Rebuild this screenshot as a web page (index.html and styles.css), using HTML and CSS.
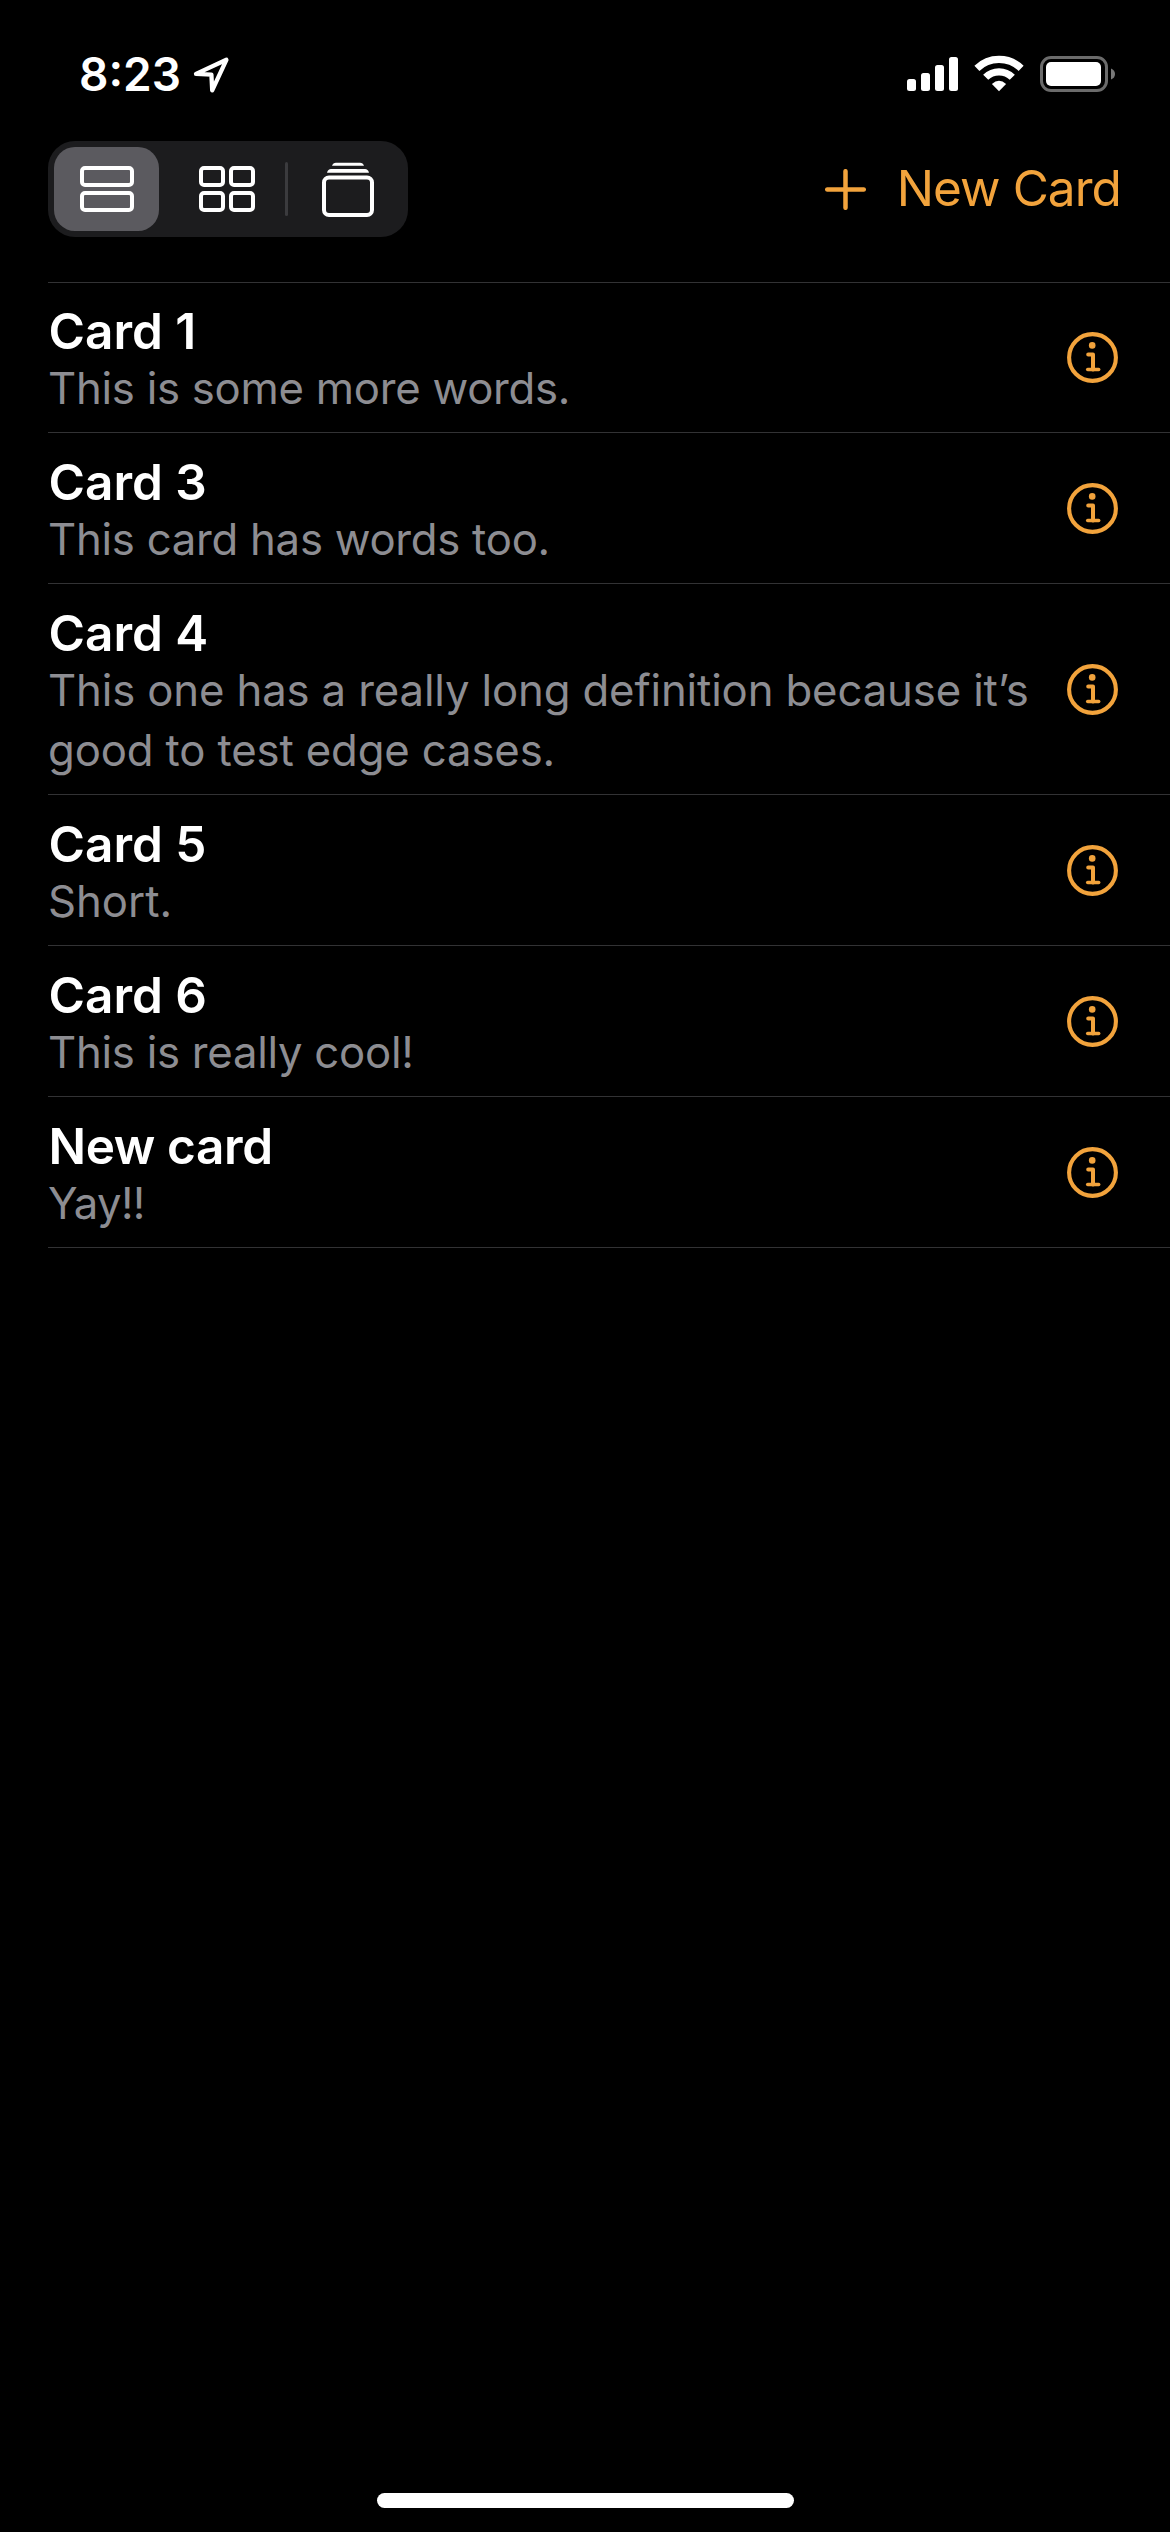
FILE: index.html
```html
<!DOCTYPE html>
<html lang="en">
<head>
<meta charset="utf-8">
<title>Cards</title>
<link rel="stylesheet" href="styles.css">
</head>
<body>
<svg width="0" height="0" class="sprite" aria-hidden="true">
  <symbol id="info" viewBox="0 0 51 51">
    <circle cx="25.5" cy="25.5" r="23.4" fill="none" stroke="currentColor" stroke-width="4.1"/>
    <circle cx="25.2" cy="13.4" r="3.3" fill="currentColor"/>
    <path d="M21.2 22.4H26V37.5" fill="none" stroke="currentColor" stroke-width="4" stroke-linecap="round" stroke-linejoin="round"/>
    <path d="M20.7 37.5H31.7" fill="none" stroke="currentColor" stroke-width="3.5" stroke-linecap="round"/>
  </symbol>
</svg>
<header class="status">
  <div class="status-left">
    <span class="time">8:23</span>
    <svg width="40" height="40" viewBox="190 54 40 40"><path d="M196 73.9L226.4 59.8L212.2 90.3L211.4 74.7Z" fill="none" stroke="#fff" stroke-width="4.3" stroke-linejoin="round"/></svg>
  </div>
  <svg width="208" height="40" viewBox="907 54 208 40">
    <g fill="#fff">
      <rect x="907" y="79" width="9" height="12" rx="2.5"/>
      <rect x="921" y="73" width="9" height="18" rx="2.5"/>
      <rect x="935" y="65" width="9" height="26" rx="2.5"/>
      <rect x="949" y="57" width="9" height="34" rx="2.5"/>
      <path d="M999 91.2L991.9 84Q999 77.4 1006.1 84Z"/>
    </g>
    <g fill="none" stroke="#fff" stroke-width="7.2">
      <path d="M976.9 68.3A31.8 31.8 0 0 1 1021.1 68.3"/>
      <path d="M985.7 77.3A18.8 18.8 0 0 1 1012.3 77.3"/>
    </g>
    <rect x="1041.5" y="57.5" width="65" height="33" rx="9.5" fill="none" stroke="#6b6b6b" stroke-width="3"/>
    <rect x="1046" y="62" width="55" height="24" rx="5" fill="#fff"/>
    <path d="M1111 68.5Q1115 70 1115 74T1111 79.5Z" fill="#777"/>
  </svg>
</header>
<nav class="toolbar">
  <div class="segments">
    <button class="segment selected" aria-label="List">
      <svg width="54" height="46" viewBox="0 0 54 46"><g fill="none" stroke="#fff" stroke-width="4"><rect x="2" y="2" width="50" height="17" rx="3"/><rect x="2" y="27" width="50" height="17" rx="3"/></g></svg>
    </button>
    <button class="segment" aria-label="Grid">
      <svg width="56" height="46" viewBox="0 0 56 46"><g fill="none" stroke="#fff" stroke-width="4"><rect x="2" y="2" width="22" height="17" rx="3"/><rect x="32" y="2" width="22" height="17" rx="3"/><rect x="2" y="27" width="22" height="17" rx="3"/><rect x="32" y="27" width="22" height="17" rx="3"/></g></svg>
    </button>
    <span class="divider"></span>
    <button class="segment" aria-label="Stack">
      <svg width="52" height="56" viewBox="0 0 52 56"><rect x="2" y="16.5" width="48" height="37.5" rx="5" fill="none" stroke="#fff" stroke-width="4"/><path d="M5 11.7Q6 8 9 8H43Q46 8 47 11.7ZM10 4.8Q11 1.7 14 1.7H38Q41 1.7 42 4.8Z" fill="#fff"/></svg>
    </button>
  </div>
  <button class="new-card">
    <svg width="41" height="41" viewBox="0 0 41 41"><path d="M20.5 2.2V38.8M2.2 20.5H38.8" stroke="currentColor" stroke-width="4.5" stroke-linecap="round"/></svg>
    <span>New Card</span>
  </button>
</nav>
<ul class="cards">
  <li class="card">
    <div class="text"><h2>Card 1</h2><p>This is some more words.</p></div>
    <svg class="info"><use href="#info"/></svg>
  </li>
  <li class="card">
    <div class="text"><h2>Card 3</h2><p>This card has words too.</p></div>
    <svg class="info"><use href="#info"/></svg>
  </li>
  <li class="card">
    <div class="text"><h2>Card 4</h2><p class="long">This one has a really long definition because it’s good to test edge cases.</p></div>
    <svg class="info"><use href="#info"/></svg>
  </li>
  <li class="card">
    <div class="text"><h2>Card 5</h2><p class="loose">Short.</p></div>
    <svg class="info"><use href="#info"/></svg>
  </li>
  <li class="card">
    <div class="text"><h2>Card 6</h2><p>This is really cool!</p></div>
    <svg class="info"><use href="#info"/></svg>
  </li>
  <li class="card">
    <div class="text"><h2 class="snug">New card</h2><p class="tight">Yay!!</p></div>
    <svg class="info"><use href="#info"/></svg>
  </li>
</ul>
<footer class="home"><span class="home-bar"></span></footer>
</body>
</html>
```
FILE: styles.css
```css
* { box-sizing: border-box; }
body {
  margin: 0;
  width: 1170px;
  height: 2532px;
  display: flex;
  flex-direction: column;
  background: #000;
  color: #fff;
  font-family: "Inter", sans-serif;
}
svg { display: block; flex: none; }
.sprite { position: absolute; }
button { border: 0; padding: 0; background: none; color: inherit; font: inherit; }

.status {
  height: 141px;
  padding: 46px 55px 39px 79px;
  display: flex;
  justify-content: space-between;
  align-items: center;
}
.status-left { display: flex; align-items: center; gap: 9px; }
.time { font-size: 46px; font-weight: 600; line-height: 56px; }

.toolbar {
  height: 96px;
  margin-bottom: 45px;
  padding: 0 49px 0 48px;
  display: flex;
  justify-content: space-between;
  align-items: center;
}
.segments {
  width: 360px;
  height: 96px;
  padding: 6px;
  display: flex;
  align-items: center;
  border-radius: 27px;
  background: #1c1c1e;
}
.segment {
  width: 105px;
  height: 84px;
  display: flex;
  align-items: center;
  justify-content: center;
  border-radius: 21px;
}
.segment + .segment { margin-left: 15px; }
.selected { background: #5b5a5f; }
.divider {
  width: 3px;
  height: 54px;
  margin: 0 7px 0 6px;
  border-radius: 1.5px;
  background: #3b3b3e;
}
.new-card {
  display: flex;
  align-items: center;
  gap: 31px;
  color: #f2a33c;
  font-size: 49.5px;
  line-height: 60px;
  letter-spacing: -0.93px;
}
.new-card span { padding-bottom: 2px; }

.cards {
  margin: 0 0 0 48px;
  padding: 0;
  list-style: none;
  border-top: 1px solid #323234;
}
.card {
  padding: 21px 52px 13px 0;
  display: flex;
  align-items: center;
  justify-content: space-between;
  border-bottom: 1px solid #323234;
}
.card:first-child { padding-top: 20px; }
.text { width: 990px; }
.card h2 {
  margin: 0;
  padding-left: 0.5px;
  font-size: 49.5px;
  font-weight: 600;
  line-height: 56px;
  letter-spacing: 0;
}
.card p {
  margin: 0;
  color: #8d8d92;
  font-size: 43.7px;
  line-height: 60px;
  letter-spacing: -0.26px;
}
.card .snug { letter-spacing: -0.4px; }
.card .long { letter-spacing: -0.14px; }
.card .loose { letter-spacing: 0; }
.card .tight { letter-spacing: -0.7px; }
.info {
  width: 51px;
  height: 51px;
  margin-bottom: 7px;
  color: #f2a33c;
}

.home {
  margin-top: auto;
  padding-bottom: 24px;
  display: flex;
  justify-content: center;
}
.home-bar { width: 417px; height: 15px; border-radius: 8px; background: #fff; }
```
